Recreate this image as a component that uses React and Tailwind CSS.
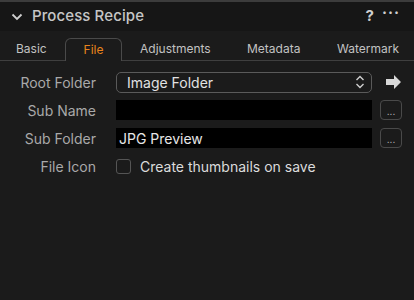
const FONT = { fontFamily: "Inter, 'Noto Sans', sans-serif" };

function Dots() {
  return (
    <button className="w-[22px] h-[20px] rounded-[4px] border border-[#4a4a4a] flex items-center justify-center text-[#bdbdbd] text-[10px] leading-none pt-[1px]">
      ...
    </button>
  );
}

function Row({ label, children }) {
  return (
    <div className="flex items-center h-[20px]">
      <div className="w-[96px] text-right text-[14px] text-[#a9a9a9] shrink-0">{label}</div>
      <div className="flex-1 flex items-center ml-[20px] mr-[12px]">{children}</div>
    </div>
  );
}

export default function App() {
  return (
    <main className="w-[414px] h-[300px] bg-[#1b1b1b] text-[#d0d0d0] overflow-hidden" style={FONT}>
      <div className="h-[2px] bg-[#3c3c3c]" />
      <div className="h-[29px] bg-[#161616] flex items-center pl-[11px] pr-[14px]">
        <svg width="12" height="8" viewBox="0 0 12 8" className="mr-[9px]">
          <path d="M1.5 1.5 L6 6 L10.5 1.5" fill="none" stroke="#cfcfcf" strokeWidth="1.8" />
        </svg>
        <h1 className="text-[15px] font-medium text-[#c6c6c6] tracking-[0.1px]">Process Recipe</h1>
        <div className="ml-auto flex items-center gap-[8px] text-[#cfcfcf]">
          <span className="text-[15px] font-bold">?</span>
          <span className="text-[15px] font-bold tracking-[1px] -mt-[6px]">···</span>
        </div>
      </div>

      <div className="flex items-end h-[30px] border-b border-[#3f3f3f] text-[12px] text-[#c2c2c2]">
        <div className="w-[49px] ml-[16px] h-[23px] flex items-center">Basic</div>
        <div className="h-[23px] w-[57px] -mb-px rounded-t-[6px] border border-b-0 border-[#4a4a4a] bg-[#1b1b1b] flex items-center justify-center text-[#e8831c]">
          File
        </div>
        <div className="w-[107px] ml-[18px] h-[23px] flex items-center">Adjustments</div>
        <div className="w-[90px] h-[23px] flex items-center">Metadata</div>
        <div className="h-[23px] flex items-center">Watermark</div>
      </div>

      <div className="flex flex-col gap-[8px] pt-[11px]">
        <Row label="Root Folder">
          <div className="flex-1 h-[21px] rounded-[5px] border border-[#5a5a5a] flex items-center pl-[10px] pr-[6px] text-[14px] text-[#e2e2e2]">
            Image Folder
            <svg width="10" height="14" viewBox="0 0 10 14" className="ml-auto">
              <path d="M1.5 5 L5 1.5 L8.5 5 M1.5 9 L5 12.5 L8.5 9" fill="none" stroke="#cfcfcf" strokeWidth="1.4" />
            </svg>
          </div>
          <svg width="16" height="14" viewBox="0 0 16 14" className="ml-[14px]">
            <path d="M0 4 H8 V0 L15 7 L8 14 V10 H0 Z" fill="#d8d8d8" />
          </svg>
        </Row>
        <Row label="Sub Name">
          <div className="flex-1 h-[20px] bg-black" />
          <div className="ml-[8px]"><Dots /></div>
        </Row>
        <Row label="Sub Folder">
          <div className="flex-1 h-[20px] bg-black flex items-center pl-[3px] text-[14px] text-[#e6e6e6]">JPG Preview</div>
          <div className="ml-[8px]"><Dots /></div>
        </Row>
        <Row label="File Icon">
          <div className="w-[15px] h-[15px] rounded-[3px] border border-[#555]" />
          <span className="ml-[9px] text-[14px] text-[#dcdcdc]">Create thumbnails on save</span>
        </Row>
      </div>
    </main>
  );
}
